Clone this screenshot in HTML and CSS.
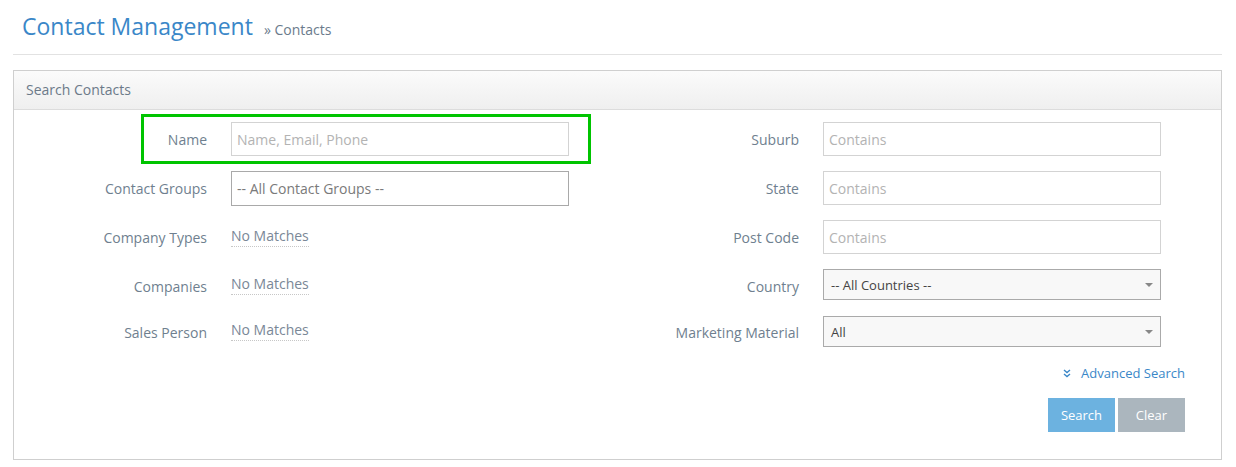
FILE: index.html
```html
<!DOCTYPE html>
<html>
<head>
<meta charset="utf-8">
<link rel="stylesheet" href="styles.css">
</head>
<body>
<div class="page">
  <div class="page-header">
    <h1 class="title">Contact Management</h1>
    <span class="crumb"><span class="raquo">»</span> Contacts</span>
  </div>
  <div class="panel">
    <div class="panel-heading">Search Contacts</div>
    <div class="panel-body">
      <div class="grid">
        <label class="lbl">Name</label>
        <input class="inp" type="text" placeholder="Name, Email, Phone">
        <label class="lbl">Suburb</label>
        <input class="inp" type="text" placeholder="Contains">

        <label class="lbl">Contact Groups</label>
        <div class="inp inp-dark">-- All Contact Groups --</div>
        <label class="lbl">State</label>
        <input class="inp" type="text" placeholder="Contains">

        <label class="lbl">Company Types</label>
        <div class="nomatch"><span>No Matches</span></div>
        <label class="lbl">Post Code</label>
        <input class="inp" type="text" placeholder="Contains">

        <label class="lbl lbl-low">Companies</label>
        <div class="nomatch"><span>No Matches</span></div>
        <label class="lbl lbl-low">Country</label>
        <div class="sel">-- All Countries --<span class="caret"></span></div>

        <label class="lbl lbl-low">Sales Person</label>
        <div class="nomatch"><span>No Matches</span></div>
        <label class="lbl lbl-low">Marketing Material</label>
        <div class="sel sel-last">All<span class="caret"></span></div>
      </div>
      <div class="actions">
        <a class="adv"><svg class="adv-ico" width="8" height="9" viewBox="0 0 8 9"><path d="M1 1 L4 3.5 L7 1 M1 5 L4 7.5 L7 5" fill="none" stroke="#3a87c8" stroke-width="1.4"/></svg>Advanced Search</a>
        <div class="btns">
          <button class="btn btn-search">Search</button>
          <button class="btn btn-clear">Clear</button>
        </div>
      </div>
    </div>
    <div class="highlight"></div>
  </div>
</div>
</body>
</html>
```
FILE: styles.css
```css
* { box-sizing: border-box; }
body {
  margin: 0;
  font-family: "Open Sans", "Liberation Sans", sans-serif;
  background: #fff;
}
.page {
  padding: 0 14px 0 13px;
}
.page-header {
  display: flex;
  align-items: baseline;
  padding: 11px 0 13px 9px;
  border-bottom: 1px solid #e2e2e2;
}
.title {
  margin: 0;
  font-size: 23px;
  font-weight: 400;
  line-height: 30px;
  color: #3a87c8;
}
.crumb {
  margin-left: 11px;
  font-size: 14px;
  color: #6b7b8c;
}
.raquo { font-size: 14px; }
.panel {
  position: relative;
  margin-top: 15px;
  border: 1px solid #cfcfcf;
}
.panel-heading {
  height: 39px;
  padding: 0 12px;
  line-height: 38px;
  font-size: 14px;
  color: #6c7a89;
  background: linear-gradient(#fbfbfb, #efefef);
  border-bottom: 1px solid #dcdcdc;
}
.panel-body {
  padding: 12px 36px 27px 0;
}
.grid {
  display: grid;
  grid-template-columns: 193px 338px 206px 338px;
  grid-template-rows: 34px 34px 34px 31px 31px;
  column-gap: 24px;
  row-gap: 15px;
  align-items: center;
}
.lbl {
  text-align: right;
  font-size: 14px;
  color: #6f7f8f;
}
.lbl-low { margin-top: 3px; }
.inp {
  height: 34px;
  width: 338px;
  border: 1px solid #d3d3d3;
  padding: 0 5px;
  font-family: inherit;
  font-size: 14px;
  color: #555;
  outline: none;
  display: flex;
  align-items: center;
}
.inp::placeholder { color: #b3b3b3; }
.inp-dark {
  height: 35px;
  border-color: #a9a9a9;
  color: #7a7a7a;
}
.nomatch {
  margin-top: -4px;
}
.nomatch span {
  font-size: 14px;
  color: #7a8797;
  border-bottom: 1px dotted #c7c7c7;
  padding-bottom: 1px;
}
.sel {
  position: relative;
  height: 31px;
  border: 1px solid #aaa;
  background: #f8f8f8;
  padding: 0 7px;
  font-size: 13px;
  color: #444;
  display: flex;
  align-items: center;
}
.sel-last { margin-top: 2px; }
.caret {
  position: absolute;
  right: 7px;
  top: 13px;
  width: 0;
  height: 0;
  border-left: 4px solid transparent;
  border-right: 4px solid transparent;
  border-top: 4px solid #888;
}
.actions {
  display: flex;
  flex-direction: column;
  align-items: flex-end;
  margin-top: 17px;
}
.adv {
  display: flex;
  align-items: center;
  font-size: 13px;
  line-height: 20px;
  color: #3a87c8;
}
.adv-ico { margin-right: 10px; }
.btns {
  display: flex;
  gap: 3px;
  margin-top: 15px;
}
.btn {
  width: 67px;
  height: 34px;
  border: 0;
  font-family: inherit;
  font-size: 13px;
  color: #fff;
}
.btn-search { background: #6cb2e0; }
.btn-clear { background: #abb6be; }
.highlight {
  position: absolute;
  left: 127px;
  top: 43px;
  width: 450px;
  height: 50px;
  border: 3px solid #00c400;
}
```
